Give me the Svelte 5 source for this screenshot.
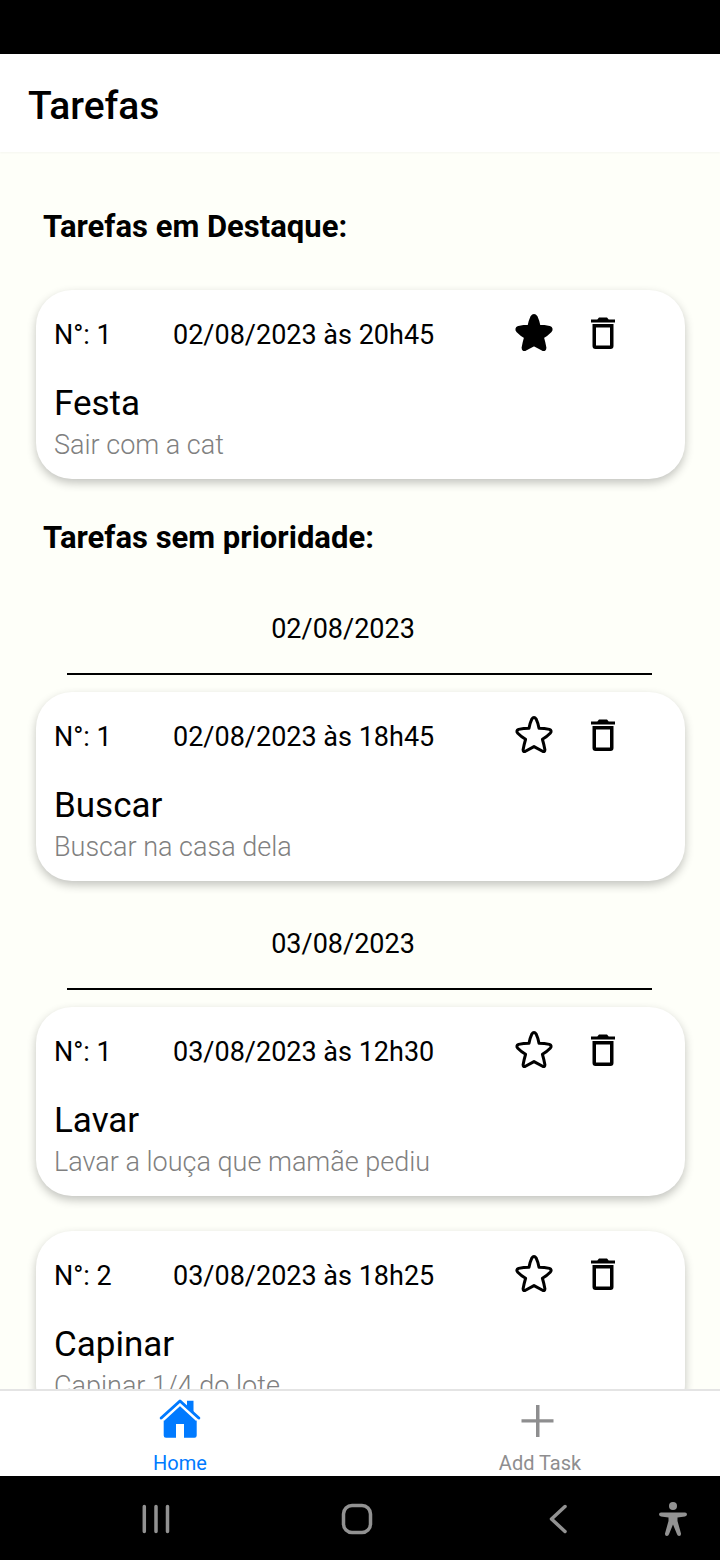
<script>
  let featured = $state([
    { number: 1, when: '02/08/2023 às 20h45', title: 'Festa', text: 'Sair com a cat', starred: true },
  ]);

  let groups = $state([
    {
      date: '02/08/2023',
      tasks: [
        { number: 1, when: '02/08/2023 às 18h45', title: 'Buscar', text: 'Buscar na casa dela', starred: false },
      ],
    },
    {
      date: '03/08/2023',
      tasks: [
        { number: 1, when: '03/08/2023 às 12h30', title: 'Lavar', text: 'Lavar a louça que mamãe pediu', starred: false },
        { number: 2, when: '03/08/2023 às 18h25', title: 'Capinar', text: 'Capinar 1/4 do lote', starred: false },
      ],
    },
  ]);
</script>

{#snippet card(task)}
  <article class="card">
    <div class="meta">
      <span class="number">N°: {task.number}</span>
      <time>{task.when}</time>
      <div class="actions">
        <button aria-label="Destacar" aria-pressed={task.starred} onclick={() => (task.starred = !task.starred)}>
          <svg class="star" class:filled={task.starred} viewBox="0 0 40 40" width="40" height="40">
            <path d="M17.800 4.200Q20 0.900 22.200 4.200Q24.200 8.500 25 13.300Q30.500 13.300 35.400 14.400Q38.400 15.600 36.200 18.200Q32.800 21.700 28.400 24.200Q30 29.500 30.900 34.800Q30.900 37.200 28.600 36.300L20 31.600L11.400 36.300Q9.100 37.200 9.100 34.800Q10 29.500 11.600 24.200Q7.200 21.700 3.800 18.200Q1.600 15.600 4.600 14.400Q9.500 13.300 15 13.300Q15.800 8.500 17.800 4.200Z" />
          </svg>
        </button>
        <button aria-label="Excluir">
          <svg viewBox="0 0 24 34" width="24" height="34">
            <path d="M0 3.500H6.300L8 1.500H16L17.700 3.500H24V6.500H0Z" />
            <path fill-rule="evenodd" d="M1.500 8H22.500V30Q22.500 33 19.500 33H4.500Q1.500 33 1.500 30ZM5 11.500V29.500H19V11.500Z" />
          </svg>
        </button>
      </div>
    </div>
    <h3>{task.title}</h3>
    <p>{task.text}</p>
  </article>
{/snippet}

<div class="screen">
  <div class="status"></div>
  <header><h1>Tarefas</h1></header>

  <main>
    <h2>Tarefas em Destaque:</h2>
    <div class="list">
      {#each featured as task}
        {@render card(task)}
      {/each}
    </div>

    <h2>Tarefas sem prioridade:</h2>
    <div class="list">
      {#each groups as group}
        <section>
          <div class="date">{group.date}</div>
          <div class="list">
            {#each group.tasks as task}
              {@render card(task)}
            {/each}
          </div>
        </section>
      {/each}
    </div>
  </main>

  <nav class="tabs">
    <a class="active" href="#home">
      <svg viewBox="0 0 42 42" width="42" height="42">
        <path d="M21 7L37.700 22V37.500Q37.700 39.700 35.500 39.700H25V26H17V39.700H7Q4.700 39.700 4.700 37.500V22Z" />
        <path class="gap" d="M2.500 20.500L21 3.500L39.500 20.500" />
        <path d="M28 2.700H34.500V15.500L28 9.500Z" />
        <path class="roof" d="M2.200 20L21 3L39.800 20" />
      </svg>
      <span>Home</span>
    </a>
    <a href="#add">
      <svg viewBox="0 0 42 42" width="42" height="42">
        <path d="M17 7H20.500V21.200H34.500V24.500H20.500V39H17V24.500H2.500V21.200H17Z" />
      </svg>
      <span>Add Task</span>
    </a>
  </nav>

  <div class="system">
    <button aria-label="Recentes">
      <svg viewBox="0 0 34 34" width="34" height="34">
        <path class="line" d="M5.300 4.500V29.500M17 4.500V29.500M28.500 4.500V29.500" />
      </svg>
    </button>
    <button aria-label="Início">
      <svg viewBox="0 0 34 34" width="34" height="34">
        <rect class="line" x="3.500" y="3.500" width="27" height="27" rx="8.500" />
      </svg>
    </button>
    <button aria-label="Voltar">
      <svg viewBox="0 0 34 34" width="34" height="34">
        <path class="line" d="M24 4.500L10.500 17L24 29.500" />
      </svg>
    </button>
    <button aria-label="Acessibilidade">
      <svg viewBox="0 0 28 34" width="28" height="34">
        <circle cx="14" cy="4" r="4" />
        <path d="M2 10.500H26Q28 10.700 28 12.600Q27.800 14.300 26 14.500L18.500 15.500V19L22 31.500Q22.200 33.700 20.200 33.900Q18.600 34 18 32.300L14 22.500L10 32.300Q9.400 34 7.800 33.900Q5.800 33.700 6 31.500L9.500 19V15.500L2 14.500Q0.200 14.300 0 12.600Q0 10.700 2 10.500Z" />
      </svg>
    </button>
  </div>
</div>

<style>
  :global(body) {
    margin: 0;
  }

  .screen {
    display: flex;
    flex-direction: column;
    height: 100vh;
    background: #fefff9;
    color: #000;
    font-family: Roboto, sans-serif;
    font-size: 27px;
    line-height: 32px;
  }

  h1, h2, h3, p {
    margin: 0;
  }

  button {
    display: flex;
    padding: 0;
    border: 0;
    background: none;
    color: inherit;
    cursor: pointer;
  }

  svg {
    display: block;
    fill: currentColor;
  }

  .status {
    flex: none;
    height: 54px;
    background: #000;
  }

  header {
    flex: none;
    padding: 30px 28px 24px;
    background: #fff;
    box-shadow: 0 1px 2px rgba(0, 0, 0, 0.04);
  }

  h1 {
    font-size: 39px;
    font-weight: 500;
    line-height: 44px;
  }

  main {
    flex: 1;
    min-height: 0;
    overflow: hidden;
    padding: 16px 35px 0 36px;
  }

  h2 {
    margin: 39px 7px 43px;
    font-size: 31px;
    font-weight: 700;
    line-height: 40px;
  }

  .list {
    display: flex;
    flex-direction: column;
    gap: 35px;
  }

  .date {
    margin: 12px 33px 17px 31px;
    padding: 0 33px 28px 0;
    border-bottom: 2px solid #000;
    text-align: center;
  }

  .card {
    padding: 23px 18px 18px;
    border-radius: 36px;
    background: #fff;
    box-shadow: 0 4px 10px rgba(0, 0, 0, 0.24);
  }

  .meta {
    display: flex;
    align-items: center;
    height: 44px;
    margin-bottom: 25px;
  }

  .number {
    width: 119px;
  }

  .actions {
    display: flex;
    align-items: center;
    gap: 37px;
    margin: 0 52px 4px auto;
  }

  .star {
    fill: none;
    stroke: currentColor;
    stroke-width: 3;
    stroke-linejoin: round;
  }

  .star.filled {
    fill: currentColor;
  }

  h3 {
    margin-bottom: 3px;
    font-size: 35px;
    font-weight: 400;
    line-height: 44px;
  }

  p {
    color: #808080;
    font-weight: 300;
  }

  .tabs {
    flex: none;
    display: grid;
    grid-template-columns: 1fr 1fr;
    border-top: 2px solid #e4e4e4;
    background: #fff;
  }

  .tabs a {
    display: flex;
    flex-direction: column;
    align-items: center;
    gap: 11px;
    padding: 7px 0 1px;
    color: #8e8e8f;
    font-size: 20px;
    line-height: 24px;
    text-decoration: none;
  }

  .tabs .active {
    color: #007aff;
  }

  .gap {
    fill: none;
    stroke: #fff;
    stroke-width: 7;
  }

  .roof {
    fill: none;
    stroke: currentColor;
    stroke-width: 3;
    stroke-linecap: round;
    stroke-linejoin: round;
  }

  .system {
    flex: none;
    display: grid;
    grid-template-columns: 201fr 201fr 201fr 61fr;
    align-items: center;
    justify-items: center;
    height: 82px;
    padding: 2px 0 0 55px;
    background: #000;
    color: #929292;
  }

  .system button:last-child {
    justify-self: start;
  }

  .line {
    fill: none;
    stroke: currentColor;
    stroke-width: 3.5;
    stroke-linecap: round;
    stroke-linejoin: round;
  }
</style>
